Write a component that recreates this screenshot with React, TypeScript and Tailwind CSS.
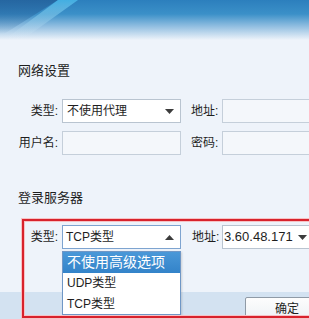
import React from "react";

const FONT = {
  fontFamily: '"Liberation Sans", "Noto Sans CJK SC", sans-serif',
};

function Arrow({ up }: { up?: boolean }) {
  return (
    <svg width="9" height="5" viewBox="0 0 9 5" className="shrink-0">
      {up ? (
        <path d="M0 5 L4.5 0 L9 5 Z" fill="#3c3c3c" />
      ) : (
        <path d="M0 0 L9 0 L4.5 5 Z" fill="#3c3c3c" />
      )}
    </svg>
  );
}

function Label({ children }: { children: React.ReactNode }) {
  return (
    <span className="w-[44px] shrink-0 whitespace-nowrap text-right text-[12px] text-[#1e1e1e]">
      {children}
    </span>
  );
}

export default function App() {
  return (
    <div
      className="relative h-[319px] w-[309px] overflow-hidden bg-[#eef3fa] text-[#1e1e1e]"
      style={FONT}
    >
      {/* Header banner */}
      <div className="relative h-[40px] bg-[linear-gradient(to_bottom,#2c7fbd_0%,#3b90c8_35%,#8fbde0_65%,#eef3fa_100%)]">
        <svg
          className="absolute inset-0"
          width="309"
          height="40"
          viewBox="0 0 309 40"
        >
          <defs>
            <linearGradient id="beam" x1="0" y1="0" x2="0" y2="1">
              <stop offset="0" stopColor="#45b4e6" stopOpacity="0.9" />
              <stop offset="1" stopColor="#eef3fa" stopOpacity="0" />
            </linearGradient>
            <linearGradient id="dark" x1="0" y1="0" x2="0" y2="1">
              <stop offset="0" stopColor="#24609a" stopOpacity="0.8" />
              <stop offset="1" stopColor="#24609a" stopOpacity="0" />
            </linearGradient>
          </defs>
          <path d="M0 0 L58 0 L4 34 L0 34 Z" fill="url(#dark)" />
          <path d="M58 0 L78 0 L22 40 L4 40 Z" fill="url(#beam)" />
        </svg>
      </div>

      {/* Network settings */}
      <div className="pl-[18px] pt-[23px] text-[13px] leading-[16px]">网络设置</div>

      <div className="mt-[20px] flex flex-col gap-[8px] pl-[14px]">
        <div className="flex items-center">
          <Label>类型:</Label>
          <div className="ml-[4px] flex h-[24px] w-[119px] shrink-0 items-center justify-between border border-[#b9c4d0] bg-white pl-[4px] pr-[6px] text-[12px]">
            <span>不使用代理</span>
            <Arrow />
          </div>
          <span className="ml-[10px] w-[28px] shrink-0 whitespace-nowrap text-[12px]">地址:</span>
          <div className="ml-[3px] h-[24px] w-[100px] shrink-0 border border-[#c5cfda] bg-[#f4f7fb]" />
        </div>
        <div className="flex items-center">
          <Label>用户名:</Label>
          <div className="ml-[4px] h-[24px] w-[119px] shrink-0 border border-[#c5cfda] bg-[#f4f7fb]" />
          <span className="ml-[10px] w-[28px] shrink-0 whitespace-nowrap text-[12px]">密码:</span>
          <div className="ml-[3px] h-[24px] w-[100px] shrink-0 border border-[#c5cfda] bg-[#f4f7fb]" />
        </div>
      </div>

      {/* Login server */}
      <div className="pl-[18px] pt-[35px] text-[13px] leading-[16px]">登录服务器</div>

      <div className="mt-[19px] flex items-center pl-[14px]">
        <Label>类型:</Label>
        <div className="ml-[4px] flex h-[24px] w-[119px] shrink-0 items-center justify-between border border-[#7ea4d0] bg-white pl-[3px] pr-[6px] text-[12px]">
          <span>TCP类型</span>
          <Arrow up />
        </div>
        <span className="ml-[11px] w-[28px] shrink-0 whitespace-nowrap text-[12px]">地址:</span>
        <div className="ml-[2px] flex h-[24px] w-[90px] shrink-0 items-center gap-[5px] border border-[#b9c4d0] bg-white pl-[1px] text-[13px]">
          <span className="whitespace-nowrap">3.60.48.171</span>
          <Arrow />
        </div>
      </div>

      {/* Footer band */}
      <div className="absolute bottom-0 left-0 right-0 h-[27px] bg-[#d3e2f1] pl-[245px] pt-[5px]">
        <div className="flex h-[24px] w-[84px] items-center justify-center rounded-[2px] border border-[#8f9aa6] bg-[linear-gradient(to_bottom,#fdfdfd,#edf1f5)] text-[12px]">
          确定
        </div>
      </div>

      {/* Open dropdown list */}
      <div className="absolute left-[62px] top-[251px] w-[119px] border border-[#6f97c6] bg-white text-[12px] shadow-[1px_1px_2px_rgba(0,0,0,0.15)]">
        <div className="flex h-[21px] items-center bg-[linear-gradient(to_bottom,#4a98d8,#3383c9)] pl-[4px] text-[14px] text-white">
          不使用高级选项
        </div>
        <div className="flex h-[20px] items-center pl-[4px]">UDP类型</div>
        <div className="flex h-[21px] items-center pl-[4px]">TCP类型</div>
      </div>

      {/* Red highlight annotation */}
      <div className="pointer-events-none absolute left-[22px] top-[219px] h-[99px] w-[300px] border-2 border-[#d8222c] shadow-[0_0_0_1px_#f6c2c5,inset_0_0_0_1px_#f6c2c5]" />
    </div>
  );
}
